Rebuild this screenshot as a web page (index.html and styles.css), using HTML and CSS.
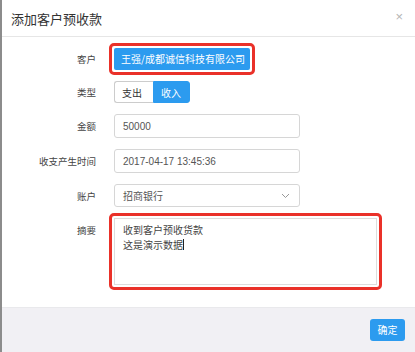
FILE: index.html
```html
<!DOCTYPE html>
<html lang="zh-CN">
<head>
<meta charset="utf-8">
<link rel="stylesheet" href="styles.css">
</head>
<body>
<div class="dialog">
  <div class="header">
    <div class="title">添加客户预收款</div>
    <div class="close">×</div>
  </div>
  <div class="body">
    <div class="form">
      <div class="label">客户</div>
      <div class="ctrl"><span class="mark mark-btn"><span class="btn-blue">王强/成都诚信科技有限公司</span></span></div>

      <div class="label">类型</div>
      <div class="ctrl"><div class="seg"><span class="seg-item">支出</span><span class="seg-item active">收入</span></div></div>

      <div class="label">金额</div>
      <div class="ctrl"><div class="input">50000</div></div>

      <div class="label">收支产生时间</div>
      <div class="ctrl"><div class="input">2017-04-17 13:45:36</div></div>

      <div class="label">账户</div>
      <div class="ctrl"><div class="input select"><span>招商银行</span>
        <svg class="chev" width="9" height="6" viewBox="0 0 9 6"><path d="M1 1 L4.5 4.5 L8 1" fill="none" stroke="#999" stroke-width="1"/></svg></div></div>

      <div class="label label-top">摘要</div>
      <div class="ctrl"><div class="mark mark-area"><div class="textarea">收到客户预收货款<br>这是演示数据<span class="caret"></span></div></div></div>
    </div>
  </div>
  <div class="footer">
    <span class="btn-ok">确定</span>
  </div>
</div>
</body>
</html>
```

FILE: styles.css
```css
html, body {
  margin: 0;
  padding: 0;
  background: #fff;
}
body {
  font-family: "Noto Sans CJK SC", "Liberation Sans", sans-serif;
  font-size: 10px;
  color: #333;
}
.dialog {
  width: 413px;
  height: 352px;
  border-left: 2px solid #8c8c8c;
  display: flex;
  flex-direction: column;
  background: #fff;
}
.header {
  height: 36px;
  border-bottom: 1px solid #e6e6e6;
  display: flex;
  align-items: center;
  justify-content: space-between;
  padding: 0 12px 0 9px;
  flex-shrink: 0;
}
.title {
  font-size: 13px;
  color: #333;
}
.close {
  font-family: "Liberation Sans", sans-serif;
  font-size: 13px;
  color: #b5b5b5;
  margin-top: -4px;
}
.body {
  flex: 1;
  padding-top: 11px;
}
.form {
  display: grid;
  grid-template-columns: 94px 1fr;
  column-gap: 18px;
  row-gap: 11px;
}
.label {
  text-align: right;
  font-size: 9.5px;
  color: #444;
  display: flex;
  align-items: center;
  justify-content: flex-end;
}
.label-top {
  align-items: flex-start;
  padding-top: 5px;
}
.ctrl {
  display: flex;
  align-items: center;
}
.mark {
  border: 3px solid #ea3129;
  border-radius: 5px;
  padding: 2px;
  margin: -5px;
}
.btn-blue {
  display: block;
  height: 22px;
  line-height: 22px;
  padding: 0 5px 0 7px;
  background: #2c9bef;
  color: #fff;
  font-size: 10px;
  border-radius: 2px;
}
.seg {
  display: flex;
  height: 22px;
}
.seg-item {
  display: flex;
  align-items: center;
  padding: 0 7px;
  border: 1px solid #ccc;
  background: #fff;
  color: #333;
  font-size: 10px;
}
.seg-item:first-child {
  border-radius: 3px 0 0 3px;
  border-right: 0;
  width: 24px;
}
.seg-item.active {
  background: #2c9bef;
  border-color: #2c9bef;
  color: #fff;
  border-radius: 0 3px 3px 0;
  width: 21px;
}
.input {
  box-sizing: border-box;
  width: 186px;
  height: 24px;
  border: 1px solid #d6d6d6;
  border-radius: 3px;
  padding: 0 8px;
  display: flex;
  align-items: center;
  color: #555;
  font-family: "Liberation Sans", "Noto Sans CJK SC", sans-serif;
  font-size: 10px;
}
.select {
  height: 23px;
  justify-content: space-between;
  font-family: "Noto Sans CJK SC", sans-serif;
  padding-right: 9px;
}
.mark-area {
  width: 263px;
}
.textarea {
  box-sizing: border-box;
  height: 67px;
  border: 1px solid #ddd;
  background: #fff;
  padding: 3px 8px;
  line-height: 15px;
  color: #444;
  font-size: 10px;
}
.caret {
  display: inline-block;
  width: 1px;
  height: 11px;
  background: #222;
  vertical-align: -1px;
}
.footer {
  height: 44px;
  flex-shrink: 0;
  background: #f1f0f4;
  border-top: 1px solid #e9e9ec;
  display: flex;
  justify-content: flex-end;
  align-items: center;
  padding-right: 10px;
}
.btn-ok {
  display: block;
  width: 35px;
  height: 22px;
  line-height: 22px;
  text-align: center;
  background: #2c9bef;
  color: #fff;
  border-radius: 3px;
  font-size: 10px;
}
```
